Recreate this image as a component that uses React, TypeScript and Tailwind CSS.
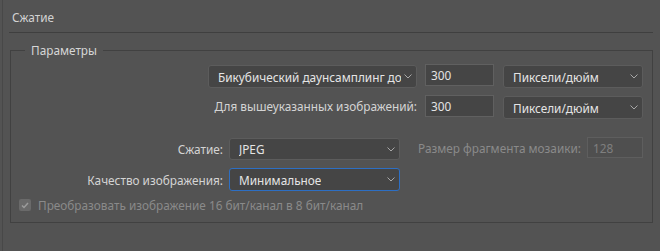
import React from 'react';

const font = { fontFamily: '"Noto Sans", "Open Sans", sans-serif' };

const Chevron = () => (
  <svg width="8" height="5" viewBox="0 0 8 5" className="shrink-0 ml-[3px]">
    <path d="M0.5 0.5 L4 4 L7.5 0.5" fill="none" stroke="#a8a8a8" strokeWidth="1" />
  </svg>
);

const Select = ({ value, className, focused }: { value: string; className: string; focused?: boolean }) => (
  <div
    className={
      'flex items-center justify-between pl-[9px] pr-[4px] rounded-[3px] bg-[#454545] border text-[11.8px] text-[#e4e4e4] whitespace-nowrap overflow-hidden ' +
      (focused ? 'border-[#2d6fc4]' : 'border-[#5c5c5c]') +
      ' ' +
      className
    }
  >
    <span className="overflow-hidden">{value}</span>
    <Chevron />
  </div>
);

const Field = ({ value, className, disabled }: { value: string; className: string; disabled?: boolean }) => (
  <div
    className={
      'flex items-center pl-[5px] border text-[11.8px] ' +
      (disabled
        ? 'bg-[#4f4f4f] border-[#5e5e5e] text-[#7f7f7f]'
        : 'bg-[#454545] border-[#606060] text-[#e4e4e4]') +
      ' ' +
      className
    }
  >
    {value}
  </div>
);

export default function App() {
  return (
    <div className="w-[660px] h-[251px] bg-[#535353] pl-[2px] leading-[16px]" style={font}>
      <div className="h-full border-l border-[#484848] pl-[6px]">
        <div className="w-[644px]">
          <div className="h-[33px] pt-[9px] pl-[3px] border-b border-[#3f3f3f] text-[11.8px] text-[#d2d2d2]">
            Сжатие
          </div>

          <fieldset className="mt-[9px] ml-[1px] w-[643px] border border-[#414141] pb-[11px]">
            <legend className="ml-[14px] px-[6px] text-[11.8px] text-[#d6d6d6]">Параметры</legend>

            <div className="mt-[6px] flex items-start justify-end pr-[9px]">
              <Select value="Бикубический даунсамплинг до" className="mt-[1px] h-[23px] w-[209px]" />
              <Field value="300" className="ml-[8px] h-[22px] w-[69px]" />
              <Select value="Пиксели/дюйм" className="ml-[9px] mt-[1px] h-[23px] w-[140px]" />
            </div>

            <div className="mt-[7px] flex items-start justify-end pr-[9px]">
              <div className="h-[22px] flex items-center text-[11.8px] text-[#d4d4d4]">
                Для вышеуказанных изображений:
              </div>
              <Field value="300" className="ml-[8px] h-[22px] w-[69px]" />
              <Select value="Пиксели/дюйм" className="ml-[9px] mt-[1px] h-[23px] w-[140px]" />
            </div>

            <div className="mt-[18px] flex items-start pr-[9px]">
              <div className="w-[212px] mt-[1px] h-[22px] flex items-center justify-end text-[11.8px] text-[#d4d4d4]">
                Сжатие:
              </div>
              <Select value="JPEG" className="ml-[6px] mt-[1px] h-[22px] w-[171px] pl-[8px]" />
              <div className="ml-auto h-[21px] flex items-center text-[11.8px] text-[#8a8a8a]">
                Размер фрагмента мозаики:
              </div>
              <Field value="128" disabled className="ml-[6px] h-[21px] w-[56px]" />
            </div>

            <div className="mt-[8px] flex items-start">
              <div className="w-[212px] h-[23px] flex items-center justify-end text-[11.8px] text-[#d4d4d4]">
                Качество изображения:
              </div>
              <Select value="Минимальное" focused className="ml-[6px] h-[23px] w-[171px] pl-[8px]" />
            </div>

            <div className="mt-[8px] flex items-center h-[12px]">
              <div className="ml-[8px] w-[12px] h-[12px] rounded-[2px] bg-[#6a6a6a] flex items-center justify-center">
                <svg width="8" height="7" viewBox="0 0 8 7">
                  <path d="M1 3.5 L3 5.5 L7 1" fill="none" stroke="#9c9c9c" strokeWidth="1.5" />
                </svg>
              </div>
              <span className="ml-[7px] text-[11.8px] text-[#8a8a8a] whitespace-nowrap">
                Преобразовать изображение 16 бит/канал в 8 бит/канал
              </span>
            </div>
          </fieldset>
        </div>
      </div>
    </div>
  );
}
